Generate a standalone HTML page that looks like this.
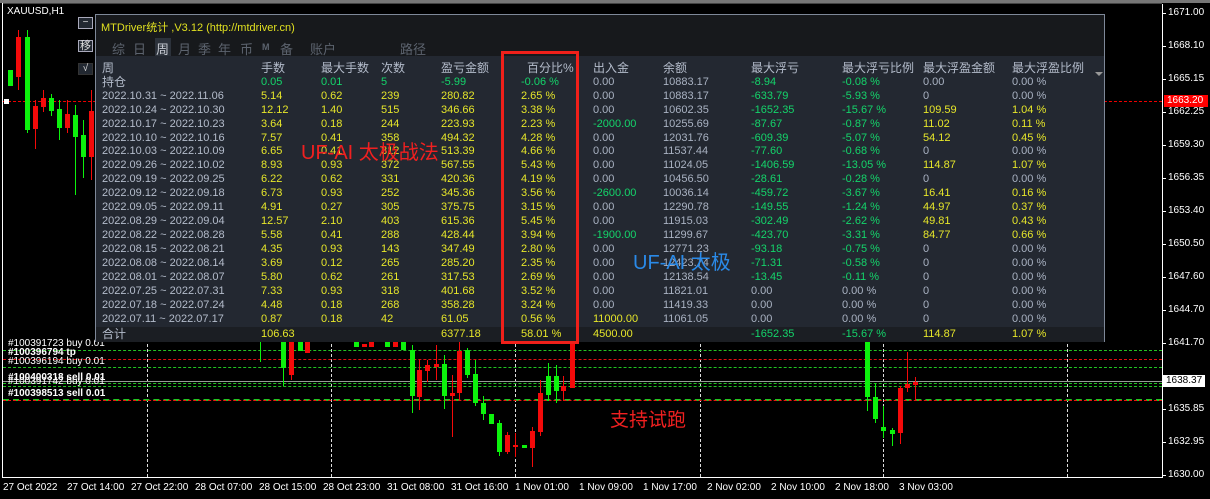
<!DOCTYPE html>
<html><head><meta charset="utf-8"><style>
*{margin:0;padding:0;box-sizing:border-box}
body{width:1210px;height:499px;background:#000;position:relative;overflow:hidden;font-family:"Liberation Sans","Noto Sans CJK SC",sans-serif;font-size:11px;color:#fff}
.a{position:absolute}
.g{position:absolute;background:#0cf20c;width:5px}
.r{position:absolute;background:#f40a0a;width:5px}
.gw{position:absolute;background:#0cf20c;width:1px}
.rw{position:absolute;background:#f40a0a;width:1px}
.vd{position:absolute;top:14px;height:463px;width:0;border-left:1px dashed #ddd}
.hd{position:absolute;left:3px;width:1159px;height:0}
.pl{position:absolute;left:1168px;font-size:10px;color:#fff}
.tk{position:absolute;left:1162px;width:4px;height:1px;background:#fff}
.tl{position:absolute;top:482px;font-size:10px;color:#fff}
#panel{position:absolute;left:95px;top:14px;width:1010px;height:328px;border:1px solid #7e8898;background:#232831}
#tb{position:absolute;left:0;top:0;width:100%;height:41px;background:#17191c}
.row{position:absolute;left:6px;height:14px;line-height:14px;white-space:nowrap;font-size:11px}
.row span{position:absolute;top:0}
.c0{left:0}.c1{left:159px}.c2{left:219px}.c3{left:279px}.c4{left:339px}.c5{left:419px}.c6{left:491px}.c7{left:561px}.c8{left:649px}.c9{left:740px}.c10{left:821px}.c11{left:910px}
.w{color:#b4bccb}.y{color:#e6e62a}.gr{color:#14d46a}.gy{color:#a9b2c2}
.btn{position:absolute;left:78px;width:15px;height:12px;border:1px solid #aab;background:#222831;color:#ddd;font-size:10px;line-height:10px;text-align:center}
.tab{position:absolute;top:39px;font-size:13px;color:#5c636e}
.ol{position:absolute;left:8px;font-size:10px;color:#fff;white-space:nowrap}
</style></head><body>
<div class="a" style="left:2px;top:0;width:1px;height:477px;background:#fff"></div>
<div class="a" style="left:0;top:0;width:1210px;height:3px;background:#777"></div>
<div class="a" style="left:3px;top:3px;width:1159px;height:1px;background:#444"></div>
<div class="a" style="left:2px;top:477px;width:1161px;height:1px;background:#fff"></div>
<div class="a" style="left:1162px;top:4px;width:1px;height:474px;background:#fff"></div>

<div class="vd" style="left:147px"></div><div class="vd" style="left:331px"></div><div class="vd" style="left:515px"></div><div class="vd" style="left:700px"></div><div class="vd" style="left:883px"></div><div class="vd" style="left:1067px"></div>

<div class="hd" style="top:101px;border-top:1px dashed #e00"></div>
<div class="a" style="left:4px;top:99px;width:5px;height:5px;background:#fff"></div>
<div class="hd" style="top:350px;border-top:1px dashed #22c422"></div>
<div class="hd" style="top:359px;border-top:1px dashed #e01010"></div>
<div class="hd" style="top:367px;border-top:1px dashed #22c422"></div>
<div class="hd" style="top:381px;height:1px;background:#999"></div>
<div class="hd" style="top:383px;border-top:1px dashed #22c422"></div>
<div class="hd" style="top:386px;border-top:1px dashed #22c422"></div>
<div class="hd" style="top:399px;border-top:2px dashed #22c422"></div>
<div class="hd" style="top:400px;border-top:1px dashed #f01010"></div>

<div class="a" style="left:7px;top:6px;font-size:10px">XAUUSD,H1</div>

<!-- left candles -->
<div class="g" style="left:8px;top:70px;height:16px"></div>
<div class="r" style="left:16px;top:37px;height:40px"></div><div class="rw" style="left:18px;top:30px;height:60px"></div>
<div class="g" style="left:25px;top:37px;height:93px"></div><div class="gw" style="left:27px;top:30px;height:103px"></div>
<div class="r" style="left:33px;top:106px;height:23px"></div><div class="rw" style="left:35px;top:100px;height:49px"></div>
<div class="r" style="left:41px;top:98px;height:9px"></div><div class="rw" style="left:43px;top:90px;height:22px"></div>
<div class="g" style="left:49px;top:98px;height:13px"></div><div class="gw" style="left:51px;top:94px;height:22px"></div>
<div class="g" style="left:57px;top:109px;height:19px"></div><div class="gw" style="left:59px;top:100px;height:40px"></div>
<div class="r" style="left:65px;top:114px;height:14px"></div><div class="rw" style="left:67px;top:100px;height:33px"></div>
<div class="g" style="left:73px;top:115px;height:22px"></div><div class="gw" style="left:75px;top:105px;height:90px"></div>
<div class="g" style="left:81px;top:135px;height:22px"></div><div class="gw" style="left:83px;top:120px;height:58px"></div>
<div class="r" style="left:89px;top:111px;height:46px"></div><div class="rw" style="left:91px;top:90px;height:90px"></div>

<!-- bottom candles -->
<div class="gw" style="left:260px;top:342px;height:20px"></div>
<div class="g" style="left:281px;top:342px;height:26px"></div><div class="gw" style="left:283px;top:342px;height:44px"></div>
<div class="r" style="left:289px;top:342px;height:33px"></div><div class="rw" style="left:291px;top:342px;height:38px"></div>
<div class="g" style="left:298px;top:342px;height:9px"></div>
<div class="r" style="left:305px;top:342px;height:11px"></div>
<div class="g" style="left:354px;top:342px;height:5px"></div>
<div class="r" style="left:362px;top:344px;height:3px"></div>
<div class="r" style="left:369px;top:342px;height:5px"></div>
<div class="g" style="left:385px;top:342px;height:5px"></div>
<div class="r" style="left:393px;top:342px;height:5px"></div>
<div class="g" style="left:401px;top:341px;height:9px"></div>
<div class="g" style="left:410px;top:350px;height:46px"></div><div class="gw" style="left:412px;top:345px;height:68px"></div>
<div class="r" style="left:417px;top:370px;height:27px"></div><div class="rw" style="left:419px;top:360px;height:50px"></div>
<div class="r" style="left:425px;top:365px;height:6px"></div><div class="rw" style="left:427px;top:360px;height:22px"></div>
<div class="r" style="left:434px;top:364px;height:3px"></div><div class="rw" style="left:436px;top:345px;height:35px"></div>
<div class="g" style="left:442px;top:364px;height:32px"></div><div class="gw" style="left:444px;top:355px;height:54px"></div>
<div class="r" style="left:450px;top:393px;height:3px"></div><div class="rw" style="left:452px;top:375px;height:62px"></div>
<div class="r" style="left:457px;top:351px;height:42px"></div><div class="rw" style="left:459px;top:342px;height:58px"></div>
<div class="g" style="left:465px;top:350px;height:25px"></div><div class="gw" style="left:467px;top:348px;height:30px"></div>
<div class="g" style="left:473px;top:374px;height:29px"></div><div class="gw" style="left:475px;top:360px;height:46px"></div>
<div class="g" style="left:481px;top:403px;height:11px"></div><div class="gw" style="left:483px;top:396px;height:24px"></div>
<div class="g" style="left:489px;top:414px;height:10px"></div>
<div class="g" style="left:497px;top:423px;height:29px"></div><div class="gw" style="left:499px;top:420px;height:36px"></div>
<div class="r" style="left:505px;top:435px;height:17px"></div><div class="rw" style="left:507px;top:432px;height:22px"></div>
<div class="r" style="left:513px;top:445px;height:2px"></div><div class="rw" style="left:515px;top:433px;height:24px"></div>
<div class="g" style="left:522px;top:445px;height:3px"></div>
<div class="r" style="left:530px;top:431px;height:17px"></div><div class="rw" style="left:532px;top:427px;height:40px"></div>
<div class="r" style="left:538px;top:393px;height:39px"></div><div class="rw" style="left:540px;top:380px;height:56px"></div>
<div class="g" style="left:546px;top:376px;height:19px"></div><div class="gw" style="left:548px;top:363px;height:38px"></div>
<div class="g" style="left:554px;top:376px;height:15px"></div><div class="gw" style="left:556px;top:365px;height:38px"></div>
<div class="r" style="left:561px;top:386px;height:5px"></div><div class="rw" style="left:563px;top:376px;height:25px"></div>
<div class="r" style="left:570px;top:340px;height:48px"></div>
<div class="g" style="left:865px;top:342px;height:55px"></div><div class="gw" style="left:867px;top:342px;height:69px"></div>
<div class="g" style="left:873px;top:397px;height:22px"></div><div class="gw" style="left:875px;top:383px;height:40px"></div>
<div class="g" style="left:881px;top:427px;height:4px"></div><div class="gw" style="left:883px;top:406px;height:32px"></div>
<div class="g" style="left:890px;top:430px;height:4px"></div><div class="gw" style="left:892px;top:428px;height:18px"></div>
<div class="r" style="left:898px;top:388px;height:45px"></div><div class="rw" style="left:900px;top:386px;height:58px"></div>
<div class="r" style="left:905px;top:384px;height:4px"></div><div class="rw" style="left:907px;top:352px;height:40px"></div>
<div class="r" style="left:913px;top:382px;height:3px"></div><div class="rw" style="left:915px;top:377px;height:23px"></div>

<div class="ol" style="top:338px">#100391723 buy 0.01</div>
<div class="ol" style="top:347px;font-weight:bold">#100396794 tp</div>
<div class="ol" style="top:356px">#100396194 buy 0.01</div>
<div class="ol" style="top:372px;font-weight:bold">#100400318 sell 0.01</div>
<div class="ol" style="top:376px">#100391742 buy 0.01</div>
<div class="ol" style="top:388px;font-weight:bold">#100398513 sell 0.01</div>

<div class="a" style="left:610px;top:405px;font-size:19px;color:#f02020">支持试跑</div>

<!-- price axis -->
<div class="tk" style="top:13px"></div><div class="pl" style="top:7px">1671.00</div>
<div class="tk" style="top:46px"></div><div class="pl" style="top:40px">1668.10</div>
<div class="tk" style="top:79px"></div><div class="pl" style="top:73px">1665.15</div>
<div class="tk" style="top:112px"></div><div class="pl" style="top:106px">1662.25</div>
<div class="tk" style="top:145px"></div><div class="pl" style="top:139px">1659.30</div>
<div class="tk" style="top:178px"></div><div class="pl" style="top:172px">1656.35</div>
<div class="tk" style="top:211px"></div><div class="pl" style="top:205px">1653.40</div>
<div class="tk" style="top:244px"></div><div class="pl" style="top:238px">1650.50</div>
<div class="tk" style="top:277px"></div><div class="pl" style="top:271px">1647.60</div>
<div class="tk" style="top:310px"></div><div class="pl" style="top:304px">1644.70</div>
<div class="tk" style="top:343px"></div><div class="pl" style="top:337px">1641.70</div>
<div class="tk" style="top:409px"></div><div class="pl" style="top:403px">1635.85</div>
<div class="tk" style="top:442px"></div><div class="pl" style="top:436px">1632.95</div>
<div class="tk" style="top:475px"></div><div class="pl" style="top:469px">1630.00</div>
<div class="a" style="left:1164px;top:95px;width:44px;height:12px;background:#f00;color:#fff;font-size:10px;padding-left:3px;line-height:12px">1663.20</div>
<div class="a" style="left:1163px;top:375px;width:42px;height:12px;background:#fff;color:#000;font-size:10px;padding-left:3px;line-height:12px">1638.37</div>

<!-- time axis -->
<div class="tl" style="left:3px">27 Oct 2022</div>
<div class="tl" style="left:67px">27 Oct 14:00</div>
<div class="tl" style="left:131px">27 Oct 22:00</div>
<div class="tl" style="left:195px">28 Oct 07:00</div>
<div class="tl" style="left:259px">28 Oct 15:00</div>
<div class="tl" style="left:323px">28 Oct 23:00</div>
<div class="tl" style="left:387px">31 Oct 08:00</div>
<div class="tl" style="left:451px">31 Oct 16:00</div>
<div class="tl" style="left:515px">1 Nov 01:00</div>
<div class="tl" style="left:579px">1 Nov 09:00</div>
<div class="tl" style="left:643px">1 Nov 17:00</div>
<div class="tl" style="left:707px">2 Nov 02:00</div>
<div class="tl" style="left:771px">2 Nov 10:00</div>
<div class="tl" style="left:835px">2 Nov 18:00</div>
<div class="tl" style="left:899px">3 Nov 03:00</div>

<div class="btn" style="top:17px">−</div>
<div class="btn" style="top:40px;font-size:11px">移</div>
<div class="btn" style="top:63px;border-color:#333">√</div>

<div id="panel">
 <div id="tb"></div>
 <div class="a" style="left:5px;top:4px;color:#e0e020;font-size:11px">MTDriver统计 ,V3.12 (http://mtdriver.cn)</div>
 <div class="a" style="left:59px;top:23px;width:16px;height:18px;background:#2c323b"></div>
 <div class="tab" style="left:16px;top:24px">综</div>
 <div class="tab" style="left:37px;top:24px">日</div>
 <div class="tab" style="left:60px;top:24px;color:#c8ccd4">周</div>
 <div class="tab" style="left:82px;top:24px">月</div>
 <div class="tab" style="left:102px;top:24px">季</div>
 <div class="tab" style="left:122px;top:24px">年</div>
 <div class="tab" style="left:144px;top:24px">币</div>
 <div class="tab" style="left:166px;top:27px;font-size:9px;font-weight:bold">M</div>
 <div class="tab" style="left:184px;top:24px">备</div>
 <div class="tab" style="left:214px;top:24px">账户</div>
 <div class="tab" style="left:304px;top:24px">路径</div>
 <div class="a" style="left:0;top:312px;width:100%;height:15px;background:#1b1e23"></div>
 <div class="a" style="left:999px;top:57px;width:0;height:0;border-left:4px solid transparent;border-right:4px solid transparent;border-top:4px solid #999"></div>

 <div class="row w" style="top:46px;font-size:12px"><span class="c0">周</span><span class="c1">手数</span><span class="c2">最大手数</span><span class="c3">次数</span><span class="c4">盈亏金额</span><span class="c5" style="left:425px">百分比%</span><span class="c6">出入金</span><span class="c7">余额</span><span class="c8">最大浮亏</span><span class="c9">最大浮亏比例</span><span class="c10">最大浮盈金额</span><span class="c11">最大浮盈比例</span></div>
 <div class="row" style="top:60px"><span class="c0 w" style="font-size:12px">持仓</span><span class="c1 gr">0.05</span><span class="c2 gr">0.01</span><span class="c3 gr">5</span><span class="c4 gr">-5.99</span><span class="c5 gr">-0.06 %</span><span class="c6 gy">0.00</span><span class="c7 gy">10883.17</span><span class="c8 gr">-8.94</span><span class="c9 gr">-0.08 %</span><span class="c10 gy">0.00</span><span class="c11 gy">0.00 %</span></div>
 <div class="row" style="top:74px"><span class="c0 w">2022.10.31 ~ 2022.11.06</span><span class="c1 y">5.14</span><span class="c2 y">0.62</span><span class="c3 y">239</span><span class="c4 y">280.82</span><span class="c5 y">2.65 %</span><span class="c6 gy">0.00</span><span class="c7 gy">10883.17</span><span class="c8 gr">-633.79</span><span class="c9 gr">-5.93 %</span><span class="c10 gy">0</span><span class="c11 gy">0.00 %</span></div>
 <div class="row" style="top:88px"><span class="c0 w">2022.10.24 ~ 2022.10.30</span><span class="c1 y">12.12</span><span class="c2 y">1.40</span><span class="c3 y">515</span><span class="c4 y">346.66</span><span class="c5 y">3.38 %</span><span class="c6 gy">0.00</span><span class="c7 gy">10602.35</span><span class="c8 gr">-1652.35</span><span class="c9 gr">-15.67 %</span><span class="c10 y">109.59</span><span class="c11 y">1.04 %</span></div>
 <div class="row" style="top:102px"><span class="c0 w">2022.10.17 ~ 2022.10.23</span><span class="c1 y">3.64</span><span class="c2 y">0.18</span><span class="c3 y">244</span><span class="c4 y">223.93</span><span class="c5 y">2.23 %</span><span class="c6 gr">-2000.00</span><span class="c7 gy">10255.69</span><span class="c8 gr">-87.67</span><span class="c9 gr">-0.87 %</span><span class="c10 y">11.02</span><span class="c11 y">0.11 %</span></div>
 <div class="row" style="top:116px"><span class="c0 w">2022.10.10 ~ 2022.10.16</span><span class="c1 y">7.57</span><span class="c2 y">0.41</span><span class="c3 y">358</span><span class="c4 y">494.32</span><span class="c5 y">4.28 %</span><span class="c6 gy">0.00</span><span class="c7 gy">12031.76</span><span class="c8 gr">-609.39</span><span class="c9 gr">-5.07 %</span><span class="c10 y">54.12</span><span class="c11 y">0.45 %</span></div>
 <div class="row" style="top:129px"><span class="c0 w">2022.10.03 ~ 2022.10.09</span><span class="c1 y">6.65</span><span class="c2 y">0.41</span><span class="c3 y">312</span><span class="c4 y">513.39</span><span class="c5 y">4.66 %</span><span class="c6 gy">0.00</span><span class="c7 gy">11537.44</span><span class="c8 gr">-77.60</span><span class="c9 gr">-0.68 %</span><span class="c10 gy">0</span><span class="c11 gy">0.00 %</span></div>
 <div class="row" style="top:143px"><span class="c0 w">2022.09.26 ~ 2022.10.02</span><span class="c1 y">8.93</span><span class="c2 y">0.93</span><span class="c3 y">372</span><span class="c4 y">567.55</span><span class="c5 y">5.43 %</span><span class="c6 gy">0.00</span><span class="c7 gy">11024.05</span><span class="c8 gr">-1406.59</span><span class="c9 gr">-13.05 %</span><span class="c10 y">114.87</span><span class="c11 y">1.07 %</span></div>
 <div class="row" style="top:157px"><span class="c0 w">2022.09.19 ~ 2022.09.25</span><span class="c1 y">6.22</span><span class="c2 y">0.62</span><span class="c3 y">331</span><span class="c4 y">420.36</span><span class="c5 y">4.19 %</span><span class="c6 gy">0.00</span><span class="c7 gy">10456.50</span><span class="c8 gr">-28.61</span><span class="c9 gr">-0.28 %</span><span class="c10 gy">0</span><span class="c11 gy">0.00 %</span></div>
 <div class="row" style="top:171px"><span class="c0 w">2022.09.12 ~ 2022.09.18</span><span class="c1 y">6.73</span><span class="c2 y">0.93</span><span class="c3 y">252</span><span class="c4 y">345.36</span><span class="c5 y">3.56 %</span><span class="c6 gr">-2600.00</span><span class="c7 gy">10036.14</span><span class="c8 gr">-459.72</span><span class="c9 gr">-3.67 %</span><span class="c10 y">16.41</span><span class="c11 y">0.16 %</span></div>
 <div class="row" style="top:185px"><span class="c0 w">2022.09.05 ~ 2022.09.11</span><span class="c1 y">4.91</span><span class="c2 y">0.27</span><span class="c3 y">305</span><span class="c4 y">375.75</span><span class="c5 y">3.15 %</span><span class="c6 gy">0.00</span><span class="c7 gy">12290.78</span><span class="c8 gr">-149.55</span><span class="c9 gr">-1.24 %</span><span class="c10 y">44.97</span><span class="c11 y">0.37 %</span></div>
 <div class="row" style="top:199px"><span class="c0 w">2022.08.29 ~ 2022.09.04</span><span class="c1 y">12.57</span><span class="c2 y">2.10</span><span class="c3 y">403</span><span class="c4 y">615.36</span><span class="c5 y">5.45 %</span><span class="c6 gy">0.00</span><span class="c7 gy">11915.03</span><span class="c8 gr">-302.49</span><span class="c9 gr">-2.62 %</span><span class="c10 y">49.81</span><span class="c11 y">0.43 %</span></div>
 <div class="row" style="top:213px"><span class="c0 w">2022.08.22 ~ 2022.08.28</span><span class="c1 y">5.58</span><span class="c2 y">0.41</span><span class="c3 y">288</span><span class="c4 y">428.44</span><span class="c5 y">3.94 %</span><span class="c6 gr">-1900.00</span><span class="c7 gy">11299.67</span><span class="c8 gr">-423.70</span><span class="c9 gr">-3.31 %</span><span class="c10 y">84.77</span><span class="c11 y">0.66 %</span></div>
 <div class="row" style="top:227px"><span class="c0 w">2022.08.15 ~ 2022.08.21</span><span class="c1 y">4.35</span><span class="c2 y">0.93</span><span class="c3 y">143</span><span class="c4 y">347.49</span><span class="c5 y">2.80 %</span><span class="c6 gy">0.00</span><span class="c7 gy">12771.23</span><span class="c8 gr">-93.18</span><span class="c9 gr">-0.75 %</span><span class="c10 gy">0</span><span class="c11 gy">0.00 %</span></div>
 <div class="row" style="top:241px"><span class="c0 w">2022.08.08 ~ 2022.08.14</span><span class="c1 y">3.69</span><span class="c2 y">0.12</span><span class="c3 y">265</span><span class="c4 y">285.20</span><span class="c5 y">2.35 %</span><span class="c6 gy">0.00</span><span class="c7 gy">12423.74</span><span class="c8 gr">-71.31</span><span class="c9 gr">-0.58 %</span><span class="c10 gy">0</span><span class="c11 gy">0.00 %</span></div>
 <div class="row" style="top:255px"><span class="c0 w">2022.08.01 ~ 2022.08.07</span><span class="c1 y">5.80</span><span class="c2 y">0.62</span><span class="c3 y">261</span><span class="c4 y">317.53</span><span class="c5 y">2.69 %</span><span class="c6 gy">0.00</span><span class="c7 gy">12138.54</span><span class="c8 gr">-13.45</span><span class="c9 gr">-0.11 %</span><span class="c10 gy">0</span><span class="c11 gy">0.00 %</span></div>
 <div class="row" style="top:269px"><span class="c0 w">2022.07.25 ~ 2022.07.31</span><span class="c1 y">7.33</span><span class="c2 y">0.93</span><span class="c3 y">318</span><span class="c4 y">401.68</span><span class="c5 y">3.52 %</span><span class="c6 gy">0.00</span><span class="c7 gy">11821.01</span><span class="c8 gy">0.00</span><span class="c9 gy">0.00 %</span><span class="c10 gy">0</span><span class="c11 gy">0.00 %</span></div>
 <div class="row" style="top:283px"><span class="c0 w">2022.07.18 ~ 2022.07.24</span><span class="c1 y">4.48</span><span class="c2 y">0.18</span><span class="c3 y">268</span><span class="c4 y">358.28</span><span class="c5 y">3.24 %</span><span class="c6 gy">0.00</span><span class="c7 gy">11419.33</span><span class="c8 gy">0.00</span><span class="c9 gy">0.00 %</span><span class="c10 gy">0</span><span class="c11 gy">0.00 %</span></div>
 <div class="row" style="top:297px"><span class="c0 w">2022.07.11 ~ 2022.07.17</span><span class="c1 y">0.87</span><span class="c2 y">0.18</span><span class="c3 y">42</span><span class="c4 y">61.05</span><span class="c5 y">0.56 %</span><span class="c6 y">11000.00</span><span class="c7 gy">11061.05</span><span class="c8 gy">0.00</span><span class="c9 gy">0.00 %</span><span class="c10 gy">0</span><span class="c11 gy">0.00 %</span></div>
 <div class="row" style="top:312px"><span class="c0 w" style="font-size:12px">合计</span><span class="c1 y">106.63</span><span class="c4 y">6377.18</span><span class="c5 y">58.01 %</span><span class="c6 y">4500.00</span><span class="c8 gr">-1652.35</span><span class="c9 gr">-15.67 %</span><span class="c10 y">114.87</span><span class="c11 y">1.07 %</span></div>

 <div class="a" style="left:405px;top:36px;width:78px;height:293px;border:3px solid #f0201a"></div>
 <div class="a" style="left:205px;top:121px;font-size:20px;color:#f02020;white-space:nowrap">UF-AI 太极战法</div>
 <div class="a" style="left:537px;top:231px;font-size:20px;color:#2a8ae8;white-space:nowrap">UF-AI 太极</div>
</div>
</body></html>
